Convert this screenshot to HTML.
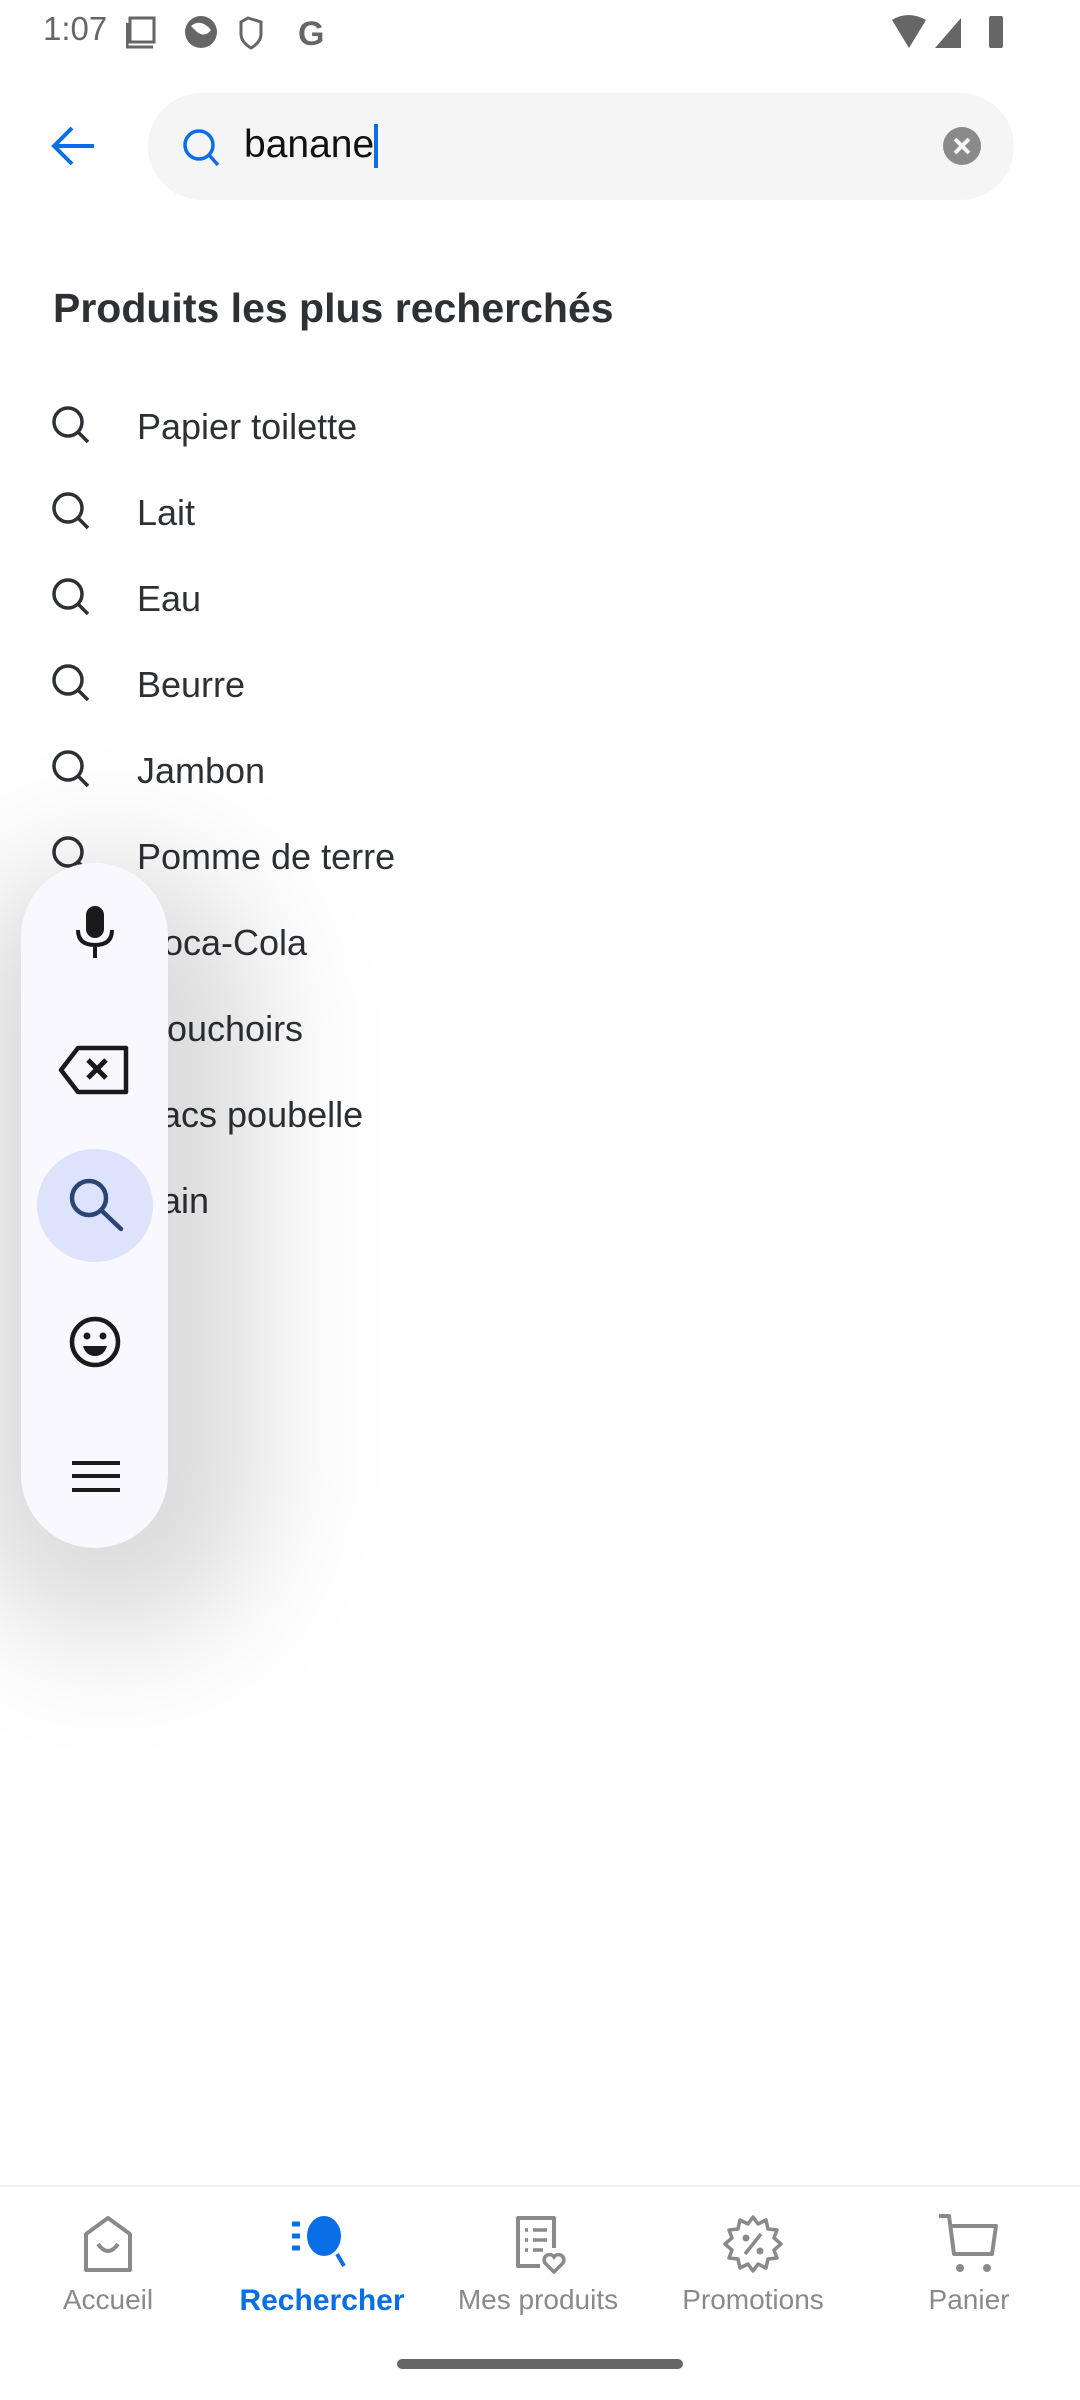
<!DOCTYPE html>
<html><head><meta charset="utf-8"><style>
*{margin:0;padding:0;box-sizing:border-box}
body{width:1080px;height:2400px;background:#fff;position:relative;overflow:hidden;font-family:"Liberation Sans",sans-serif;color:#2d3035}
.abs{position:absolute}
.item{position:absolute;left:0;width:1080px;height:86px}
.item svg{position:absolute;left:50px;top:24px}
.item span{position:absolute;left:137px;top:26px;font-size:36px;color:#2d3035}
.nav{position:absolute;top:2196px;width:216px;height:140px;text-align:center}
.nav svg{display:block;margin:18px auto 0}
.nav div{font-size:28px;color:#8a8a8a;margin-top:10px}
</style></head><body>
<div class="abs" style="left:43px;top:10px;font-size:33px;color:#666">1:07</div>
<svg class="abs" style="left:126px;top:14px" width="210" height="36" viewBox="0 0 210 36">
<rect x="4" y="4" width="24" height="24" fill="none" stroke="#666" stroke-width="3"/><path d="M1 9v24h26" fill="none" stroke="#666" stroke-width="3"/>
<circle cx="75" cy="18" r="16" fill="#666"/><path d="M65 12q10-8 20 4q-6 8-14 2" fill="#fff"/>
<path d="M122 4l13 4v12q0 8-10 14q-10-6-10-14V8z" fill="none" stroke="#666" stroke-width="3"/>
<text x="172" y="31" font-size="34" font-weight="bold" fill="#666" font-family="Liberation Sans">G</text></svg>
<svg class="abs" style="left:890px;top:12px" width="120" height="38" viewBox="0 0 120 38">
<path d="M2 8q16-10 34 0l-17 28z" fill="#666"/><path d="M45 36l26-30v30z" fill="#666"/>
<rect x="99" y="4" width="14" height="32" rx="2" fill="#666"/></svg>
<svg class="abs" style="left:50px;top:124px" width="50" height="44" viewBox="0 0 50 44"><path d="M44 22H4M22 4L4 22l18 18" fill="none" stroke="#0a6fe6" stroke-width="4"/></svg>
<div class="abs" style="left:148px;top:93px;width:866px;height:107px;border-radius:54px;background:#f5f5f5"></div>
<svg class="abs" style="left:180px;top:126px" width="44" height="44" viewBox="0 0 44 44"><circle cx="19" cy="19" r="14" fill="none" stroke="#0a6fe6" stroke-width="3.5"/><path d="M29 29l9 10" stroke="#0a6fe6" stroke-width="3.5"/></svg>
<div class="abs" style="left:244px;top:123px;font-size:39px;color:#111">banane</div>
<div class="abs" style="left:374px;top:124px;width:4px;height:44px;background:#0a6fe6"></div>
<svg class="abs" style="left:942px;top:126px" width="40" height="40" viewBox="0 0 40 40"><circle cx="20" cy="20" r="19" fill="#8a8a8a"/><path d="M13 13l14 14M27 13L13 27" stroke="#f5f5f5" stroke-width="4"/></svg>
<div class="abs" style="left:53px;top:285px;font-size:41px;font-weight:bold;color:#2d3035">Produits les plus recherchés</div>
<div class="item" style="top:380px"><svg width="44" height="44" viewBox="0 0 44 44"><circle cx="18" cy="18" r="14" fill="none" stroke="#2d3035" stroke-width="3.5"/><path d="M28 28l10 10" stroke="#2d3035" stroke-width="3.5"/></svg><span>Papier toilette</span></div>
<div class="item" style="top:466px"><svg width="44" height="44" viewBox="0 0 44 44"><circle cx="18" cy="18" r="14" fill="none" stroke="#2d3035" stroke-width="3.5"/><path d="M28 28l10 10" stroke="#2d3035" stroke-width="3.5"/></svg><span>Lait</span></div>
<div class="item" style="top:552px"><svg width="44" height="44" viewBox="0 0 44 44"><circle cx="18" cy="18" r="14" fill="none" stroke="#2d3035" stroke-width="3.5"/><path d="M28 28l10 10" stroke="#2d3035" stroke-width="3.5"/></svg><span>Eau</span></div>
<div class="item" style="top:638px"><svg width="44" height="44" viewBox="0 0 44 44"><circle cx="18" cy="18" r="14" fill="none" stroke="#2d3035" stroke-width="3.5"/><path d="M28 28l10 10" stroke="#2d3035" stroke-width="3.5"/></svg><span>Beurre</span></div>
<div class="item" style="top:724px"><svg width="44" height="44" viewBox="0 0 44 44"><circle cx="18" cy="18" r="14" fill="none" stroke="#2d3035" stroke-width="3.5"/><path d="M28 28l10 10" stroke="#2d3035" stroke-width="3.5"/></svg><span>Jambon</span></div>
<div class="item" style="top:810px"><svg width="44" height="44" viewBox="0 0 44 44"><circle cx="18" cy="18" r="14" fill="none" stroke="#2d3035" stroke-width="3.5"/><path d="M28 28l10 10" stroke="#2d3035" stroke-width="3.5"/></svg><span>Pomme de terre</span></div>
<div class="item" style="top:896px"><span>Coca-Cola</span></div>
<div class="item" style="top:982px"><span>Mouchoirs</span></div>
<div class="item" style="top:1068px"><span>Sacs poubelle</span></div>
<div class="item" style="top:1154px"><span>Pain</span></div>
<div class="abs" style="left:-40px;top:860px;width:300px;height:780px;border-radius:150px;background:rgba(0,0,0,0.14);filter:blur(60px)"></div>
<div class="abs" style="left:21px;top:863px;width:147px;height:685px;border-radius:74px;background:#f8f8fe"></div>
<svg class="abs" style="left:75px;top:906px" width="40" height="54" viewBox="0 0 40 54"><rect x="11" y="0" width="18" height="32" rx="9" fill="#1a1a1a"/><path d="M3 24q0 15 17 15t17-15M20 39v13" fill="none" stroke="#1a1a1a" stroke-width="4"/></svg>
<svg class="abs" style="left:58px;top:1045px" width="72" height="50" viewBox="0 0 72 50"><path d="M20 3h48v44H20L3 25z" fill="none" stroke="#1a1a1a" stroke-width="4.5" stroke-linejoin="round"/><path d="M30 15l18 18M48 15L30 33" stroke="#1a1a1a" stroke-width="5"/></svg>
<div class="abs" style="left:37px;top:1149px;width:116px;height:113px;border-radius:50%;background:#dce3fb"></div>
<svg class="abs" style="left:64px;top:1174px" width="64" height="64" viewBox="0 0 64 64"><circle cx="25" cy="24" r="17" fill="none" stroke="#2d4478" stroke-width="4.5"/><path d="M37 36l20 19" stroke="#2d4478" stroke-width="4.5" stroke-linecap="round"/></svg>
<svg class="abs" style="left:68px;top:1315px" width="54" height="54" viewBox="0 0 54 54"><circle cx="27" cy="27" r="23" fill="none" stroke="#1a1a1a" stroke-width="4.5"/><circle cx="19" cy="21" r="3.5" fill="#1a1a1a"/><circle cx="35" cy="21" r="3.5" fill="#1a1a1a"/><path d="M15 31h24q-3 10-12 10t-12-10z" fill="#1a1a1a"/></svg>
<svg class="abs" style="left:72px;top:1460px" width="48" height="34" viewBox="0 0 48 34"><path d="M0 3h48M0 16h48M0 30h48" stroke="#1a1a1a" stroke-width="4"/></svg>
<div class="abs" style="left:0;top:2185px;width:1080px;height:2px;background:#f0f0f0"></div>
<div class="nav" style="left:0"><svg width="56" height="60" viewBox="0 0 56 60"><path d="M6 56V20L28 4l22 16v36z" fill="none" stroke="#8a8a8a" stroke-width="4" stroke-linejoin="round"/><path d="M18 30q10 14 20 0" fill="none" stroke="#8a8a8a" stroke-width="4"/></svg><div>Accueil</div></div>
<div class="nav" style="left:214px"><svg width="64" height="60" viewBox="0 0 64 60"><path d="M2 10h8M2 22h8M2 34h8" stroke="#0a6fe6" stroke-width="5"/><ellipse cx="34" cy="22" rx="17" ry="20" fill="#0a6fe6"/><path d="M47 40l7 12" stroke="#0a6fe6" stroke-width="4"/></svg><div style="color:#0a6fe6;font-weight:bold;font-size:30px">Rechercher</div></div>
<div class="nav" style="left:430px"><svg width="56" height="60" viewBox="0 0 56 60"><path d="M30 52H8V4h36v30" fill="none" stroke="#8a8a8a" stroke-width="4" stroke-linejoin="round"/><path d="M15 16h3M23 16h14M15 26h3M23 26h14M15 36h3M23 36h10" stroke="#8a8a8a" stroke-width="3.5"/><path d="M44 58l-9-9a5 5 0 0 1 9-6a5 5 0 0 1 9 6z" fill="none" stroke="#8a8a8a" stroke-width="3.5"/></svg><div>Mes produits</div></div>
<div class="nav" style="left:645px"><svg width="60" height="60" viewBox="0 0 60 60"><path d="M30 3l5 7 8-4 2 9 9 1-3 8 7 6-7 6 3 8-9 1-2 9-8-4-5 7-5-7-8 4-2-9-9-1 3-8-7-6 7-6-3-8 9-1 2-9 8 4z" fill="none" stroke="#8a8a8a" stroke-width="3.5" stroke-linejoin="round"/><path d="M22 40l16-20" stroke="#8a8a8a" stroke-width="3.5"/><circle cx="23" cy="24" r="3.5" fill="#8a8a8a"/><circle cx="37" cy="37" r="3.5" fill="#8a8a8a"/></svg><div>Promotions</div></div>
<div class="nav" style="left:861px"><svg width="64" height="60" viewBox="0 0 64 60"><path d="M2 2h10l5 38h38l4-28H15" fill="none" stroke="#8a8a8a" stroke-width="4" stroke-linejoin="round"/><circle cx="23" cy="54" r="4" fill="#8a8a8a"/><circle cx="50" cy="54" r="4" fill="#8a8a8a"/></svg><div>Panier</div></div>
<div class="abs" style="left:397px;top:2359px;width:286px;height:10px;border-radius:5px;background:#666"></div>
</body></html>
